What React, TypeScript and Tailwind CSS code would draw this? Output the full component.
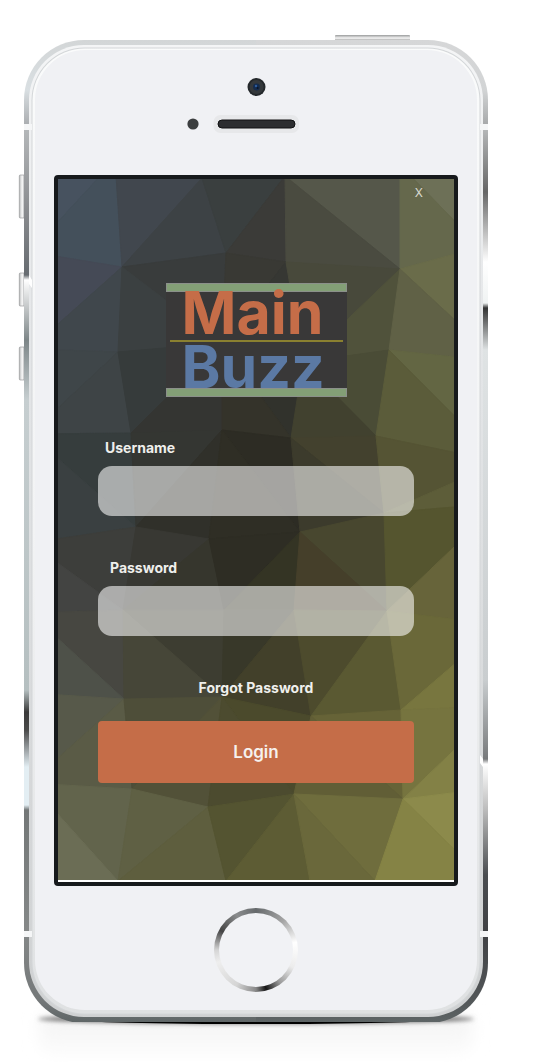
import React from "react";

type Point = [number, number];

// Vertices of the low-poly wallpaper, row by row.
const points: Point[][] = [
  [[30, 150], [115, 160], [202, 178], [285, 176], [400, 165], [480, 150]],
  [[30, 252], [122, 267], [226, 253], [286, 262], [400, 269], [480, 247]],
  [[30, 349], [118, 352], [222, 343], [303, 362], [389, 350], [500, 362]],
  [[30, 434], [131, 433], [222, 430], [291, 438], [376, 436], [500, 462]],
  [[30, 543], [136, 527], [209, 539], [300, 532], [384, 513], [500, 503]],
  [[30, 613], [123, 610], [224, 610], [294, 610], [387, 611], [500, 625]],
  [[30, 693], [124, 699], [222, 697], [311, 716], [401, 710], [500, 706]],
  [[30, 783], [132, 789], [208, 807], [294, 794], [403, 799], [500, 787]],
  [[20, 881], [118, 881], [226, 881], [310, 881], [375, 881], [500, 894]],
];

// For every cell: direction of its diagonal, upper facet, lower facet.
const facets: [string, string, string][][] = [
  [["/", "#47525f", "#44505b"], ["/", "#41474e", "#3d4245"], ["/", "#3a3f3f", "#3b3b38"], ["\\", "#55574a", "#4a4b40"], ["\\", "#6d7057", "#65684c"]],
  [["/", "#454a56", "#40474c"], ["\\", "#393c3c", "#3b4041"], ["/", "#393934", "#363733"], ["/", "#48493b", "#50523b"], ["\\", "#6a6c4a", "#606146"]],
  [["/", "#3f4649", "#3e4446"], ["/", "#363b3b", "#343532"], ["\\", "#31322c", "#34332a"], ["\\", "#4a4c36", "#41412f"], ["\\", "#636643", "#5b5c3a"]],
  [["\\", "#363d3d", "#3a4041"], ["/", "#343632", "#30302a"], ["\\", "#2d2c24", "#2f2e25"], ["\\", "#43412e", "#3c3b2c"], ["/", "#555434", "#5d5d39"]],
  [["\\", "#3d3e3b", "#434442"], ["/", "#383833", "#36362d"], ["/", "#2e2d24", "#343424"], ["\\", "#48472f", "#453f2a"], ["/", "#55552f", "#67643a"]],
  [["\\", "#474741", "#4e5149"], ["\\", "#3d3d31", "#464638"], ["/", "#383829", "#42402a"], ["/", "#4d4b2d", "#5a5932"], ["/", "#6a6839", "#78763f"]],
  [["/", "#57594a", "#5a5b46"], ["/", "#4e4e39", "#525138"], ["\\", "#4b4a2c", "#4c4b2f"], ["\\", "#666337", "#615e36"], ["/", "#76743f", "#838146"]],
  [["\\", "#62644c", "#6b6d55"], ["/", "#5f6044", "#5e5e3e"], ["/", "#545431", "#5d5c34"], ["\\", "#6f6d3d", "#6a683b"], ["\\", "#8c8a4b", "#858345"]],
];

function Wallpaper() {
  return (
    <svg
      aria-hidden="true"
      className="absolute inset-0 h-full w-full bg-[#45453a]"
      viewBox="58 179 396 701"
      preserveAspectRatio="none"
    >
      {facets.map((row, r) =>
        row.map(([dir, upper, lower], c) => {
          const tl = points[r][c];
          const tr = points[r][c + 1];
          const bl = points[r + 1][c];
          const br = points[r + 1][c + 1];
          const a = dir === "/" ? [tl, tr, bl] : [tl, tr, br];
          const b = dir === "/" ? [tr, br, bl] : [tl, br, bl];
          return (
            <g key={`${r}-${c}`} strokeWidth="1" strokeLinejoin="round">
              <polygon points={a.join(" ")} fill={upper} stroke={upper} />
              <polygon points={b.join(" ")} fill={lower} stroke={lower} />
            </g>
          );
        })
      )}
    </svg>
  );
}

function Logo() {
  return (
    <h1 className="mx-auto w-[181px] bg-[#393838] text-[59px] leading-[42px] font-bold">
      <span className="block h-[9px] border border-[#8b908a] bg-[#839f76]" />
      <span className="block pb-[6px] pl-4 text-[#c56d48]">Main</span>
      <span className="mx-1 block h-[2px] bg-[#8a8030]" />
      <span className="block h-[46px] pt-1 pl-4 text-[#5b79a4]">Buzz</span>
      <span className="block h-[9px] border border-[#8b908a] bg-[#839f76]" />
    </h1>
  );
}

function LoginForm() {
  const field =
    "h-[50px] w-full rounded-[14px] bg-white/57 px-4 text-base text-[#222] outline-none";
  return (
    <form className="flex flex-col gap-[42px] px-10 pt-[41px]" onSubmit={(e) => e.preventDefault()}>
      <div className="flex flex-col gap-2">
        <label htmlFor="username" className="pl-[7px]">Username</label>
        <input id="username" type="text" className={field} />
      </div>
      <div className="flex flex-col gap-2">
        <label htmlFor="password" className="pl-3">Password</label>
        <input id="password" type="password" className={field} />
      </div>
      <div className="flex flex-col items-center gap-[23px]">
        <a href="#forgot">Forgot Password</a>
        <button
          type="submit"
          className="h-[62px] w-full rounded bg-[#c56d48] text-[17px] font-semibold text-[#f6f1ee]"
        >
          Login
        </button>
      </div>
    </form>
  );
}

type Stops = [number, string][];

const leftRim: Stops = [
  [0, "#d3d6d7"], [50, "#d9dfe2"], [84, "#abaeb1"], [90, "#b4b7b9"], [170, "#8a8c8f"], [235, "#666b70"],
  [240, "#ffffff"], [265, "#c9cccd"], [300, "#7d8688"], [360, "#c6ced0"], [650, "#b5bfc0"], [672, "#3a3a3a"],
  [690, "#4a4a4a"], [727, "#e3eef3"], [765, "#e3eef3"], [770, "#737777"], [891, "#858888"], [960, "#747879"], [983, "#5e6566"],
];

const rightRim: Stops = [
  [0, "#d6d7d8"], [50, "#d2d4d5"], [84, "#a8aaab"], [90, "#b4b6b7"], [152, "#666666"], [222, "#ffffff"],
  [263, "#f0f3f3"], [268, "#333333"], [310, "#dfe3e4"], [640, "#c9cdcf"], [719, "#77797b"], [724, "#ffffff"],
  [770, "#bbbbbb"], [835, "#4a4d50"], [891, "#404144"], [960, "#525658"], [983, "#5e6566"],
];

function Metal({ id, stops }: { id: string; stops: Stops }) {
  return (
    <linearGradient id={id} gradientUnits="userSpaceOnUse" x1="0" y1="0" x2="0" y2="983">
      {stops.map(([y, color]) => (
        <stop key={y} offset={y / 983} stopColor={color} />
      ))}
    </linearGradient>
  );
}

function Chassis() {
  return (
    <svg
      aria-hidden="true"
      className="absolute inset-0 h-full w-full overflow-visible"
      viewBox="0 0 464 983"
      preserveAspectRatio="none"
    >
      <defs>
        <Metal id="rimLeft" stops={leftRim} />
        <Metal id="rimRight" stops={rightRim} />
        <clipPath id="body">
          <rect width="464" height="983" rx="60" />
        </clipPath>
        <linearGradient id="key">
          <stop offset="0" stopColor="#b9bbbc" />
          <stop offset="0.5" stopColor="#fafafa" />
          <stop offset="1" stopColor="#8e9193" />
        </linearGradient>
        <linearGradient id="power" x2="0" y2="1">
          <stop offset="0" stopColor="#999b9c" />
          <stop offset="0.45" stopColor="#f6f6f6" />
          <stop offset="1" stopColor="#666868" />
        </linearGradient>
        <linearGradient id="band" x2="0" y2="1">
          <stop offset="0" stopColor="#f4f5f6" />
          <stop offset="0.3" stopColor="#e4e6e8" />
          <stop offset="1" stopColor="#cfd1d2" />
        </linearGradient>
        <linearGradient id="lip" x2="0" y2="1">
          <stop offset="0" stopColor="#fafbfb" />
          <stop offset="0.5" stopColor="#f2f3f4" />
          <stop offset="1" stopColor="#dfe1e2" />
        </linearGradient>
        <linearGradient id="ground" x2="0" y2="1">
          <stop offset="0" stopColor="#f3f3f3" />
          <stop offset="1" stopColor="#fbfbfb" />
        </linearGradient>
        <filter id="soft" x="-20%" y="-200%" width="140%" height="500%">
          <feGaussianBlur stdDeviation="8" />
        </filter>
        <filter id="contact" x="-10%" y="-200%" width="120%" height="500%">
          <feGaussianBlur stdDeviation="2" />
        </filter>
      </defs>
      <rect x="15" y="970" width="434" height="44" rx="16" fill="url(#ground)" filter="url(#soft)" />
      <ellipse cx="232" cy="979" rx="218" ry="5" fill="#777" filter="url(#contact)" />
      <ellipse cx="232" cy="980" rx="180" ry="4" fill="#000" />

      <rect x="311" y="-5" width="75" height="7" rx="1" fill="url(#power)" />
      <g fill="url(#key)" stroke="#8d8f90" strokeWidth="0.6">
        <rect x="-4.7" y="135" width="6" height="43" rx="1" />
        <rect x="-4.7" y="233" width="6" height="33" rx="1" />
        <rect x="-4.7" y="307" width="6" height="33" rx="1" />
      </g>

      <g clipPath="url(#body)">
        <rect width="232" height="982" fill="url(#rimLeft)" />
        <rect x="232" width="232" height="982" fill="url(#rimRight)" />
      </g>
      <rect x="5" y="5" width="454" height="972" rx="55" fill="url(#band)" />
      <rect x="7.5" y="7.5" width="449" height="967" rx="53" fill="#d3d6d8" />
      <rect x="8.5" y="8.5" width="447" height="965" rx="52" fill="url(#lip)" />
      <rect x="11" y="10" width="442" height="960" rx="50" fill="#f0f1f4" />
      <path d="M5 235l3 5v8l-3-4zM459 719l-3-4v8l3 4z" fill="#fff" />
      <path d="M0 84h8v6H0zM456 84h8v6h-8zM0 891h8v6H0zM456 891h8v6h-8z" fill="#f5f6f7" />

      <g>
        <circle cx="232.5" cy="47" r="9" fill="#24282b" />
        <circle cx="232.5" cy="47" r="7" fill="#34383b" />
        <circle cx="232.5" cy="47" r="3.4" fill="#142b4d" />
        <circle cx="232" cy="46" r="1.2" fill="#2f5c9b" />
        <circle cx="233.6" cy="48" r="1" fill="#0b1424" />
        <circle cx="169" cy="84" r="5.6" fill="#3b3e3f" />
        <rect x="189.5" y="75" width="85.5" height="18" rx="7" fill="#e7e8ea" />
        <rect x="194" y="80" width="77" height="8" rx="4" fill="#2c2d30" stroke="#101112" />
      </g>
    </svg>
  );
}

export default function App() {
  return (
    <main className="min-h-screen overflow-hidden bg-white pt-10 pr-12 pb-[39px] pl-6 font-[Inter,'Liberation_Sans',sans-serif]">
      <div className="relative mx-auto max-w-[464px]">
        <Chassis />
        <div className="relative flex flex-col gap-[22px] px-[30px] pt-[135px] pb-[31px]">
          <section className="rounded-[4px] border-4 border-[#171a1c] bg-white pb-[2px]">
            <div className="relative">
              <Wallpaper />
              <div className="relative pb-[97px] text-[14px] leading-5 font-bold text-[#efefec]">
                <div className="flex h-7 justify-end pr-[30px]">
                  <button type="button" className="px-px text-[12px] font-normal text-[#d8d9d0]">
                    X
                  </button>
                </div>
                <div className="pt-[76px]">
                  <Logo />
                </div>
                <LoginForm />
              </div>
            </div>
          </section>

          <button
            type="button"
            aria-label="Home"
            className="size-[84px] self-center rounded-full bg-[conic-gradient(#666a6c,#a5a5a5_12%,#fff_22%,#ececec_32%,#999_40%,#161616_46%,#888_50%,#d5d5d5_58%,#eee_70%,#d5d5d5_75%,#444_83%,#8a8c8d_92%,#666a6c)] p-[5px]"
          >
            <span className="block size-full rounded-full bg-[#f1f2f5]" />
          </button>
        </div>
      </div>
    </main>
  );
}
